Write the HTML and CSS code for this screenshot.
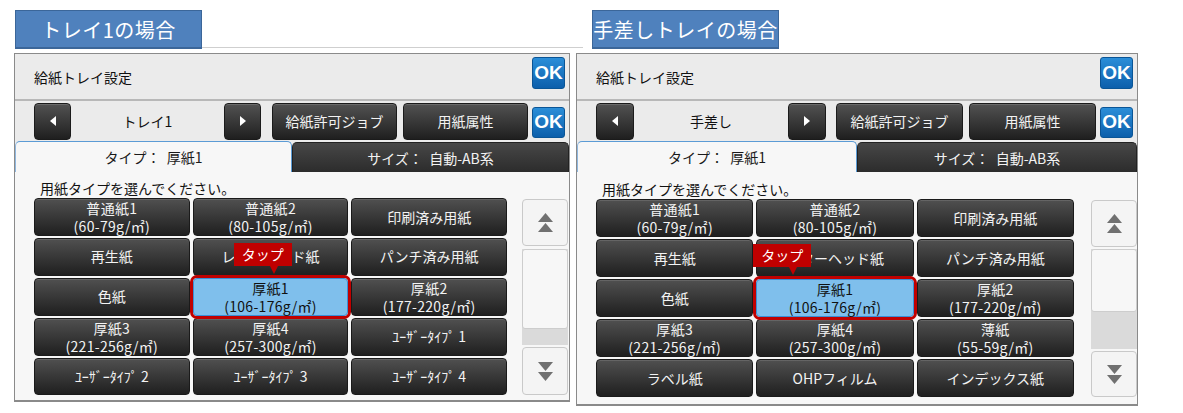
FILE: index.html
```html
<!DOCTYPE html>
<html lang="ja">
<head>
<meta charset="utf-8">
<title>給紙トレイ設定</title>
<link rel="stylesheet" href="styles.css">
</head>
<body>
<div class="page">
  <section class="col col-left">
    <div class="caption-row">
      <div class="caption">トレイ1の場合</div>
      <div class="rule"></div>
    </div>
    <div class="panel">
      <div class="panel-head">
        <span class="head-title">給紙トレイ設定</span>
        <button class="ok ok-head">OK</button>
      </div>
      <div class="toolbar">
        <div class="nav">
          <button class="btn arrow"><svg width="6" height="10" viewBox="0 0 6 10"><polygon points="6,0 6,10 0,5" fill="#fff"/></svg></button>
          <span class="nav-label">トレイ1</span>
          <button class="btn arrow"><svg width="6" height="10" viewBox="0 0 6 10"><polygon points="0,0 0,10 6,5" fill="#fff"/></svg></button>
        </div>
        <button class="btn tb-btn tb-first">給紙許可ジョブ</button>
        <button class="btn tb-btn tb-second">用紙属性</button>
        <button class="ok ok-bar">OK</button>
      </div>
      <div class="tabs">
        <div class="tab tab-active">タイプ：  厚紙1</div>
        <div class="tab tab-dark">サイズ：  自動-AB系</div>
      </div>
      <div class="content">
        <div class="main">
          <p class="prompt">用紙タイプを選んでください。</p>
          <div class="grid">
            <div class="cell two"><span>普通紙1</span><span>(60-79g/㎡)</span></div>
            <div class="cell two"><span>普通紙2</span><span>(80-105g/㎡)</span></div>
            <div class="cell">印刷済み用紙</div>
            <div class="cell">再生紙</div>
            <div class="cell">レターヘッド紙</div>
            <div class="cell">パンチ済み用紙</div>
            <div class="cell">色紙</div>
            <div class="cell two sel"><span class="tap">タップ</span><span>厚紙1</span><span>(106-176g/㎡)</span></div>
            <div class="cell two"><span>厚紙2</span><span>(177-220g/㎡)</span></div>
            <div class="cell two"><span>厚紙3</span><span>(221-256g/㎡)</span></div>
            <div class="cell two"><span>厚紙4</span><span>(257-300g/㎡)</span></div>
            <div class="cell hw">ﾕｰｻﾞｰﾀｲﾌﾟ 1</div>
            <div class="cell hw">ﾕｰｻﾞｰﾀｲﾌﾟ 2</div>
            <div class="cell hw">ﾕｰｻﾞｰﾀｲﾌﾟ 3</div>
            <div class="cell hw">ﾕｰｻﾞｰﾀｲﾌﾟ 4</div>
          </div>
        </div>
        <div class="scroll">
          <button class="sb-btn sb-up"><svg width="15" height="19" viewBox="0 0 15 19"><polygon points="7.5,0 15,9 0,9" fill="#707070"/><polygon points="7.5,10 15,19 0,19" fill="#707070"/></svg></button>
          <div class="track"><div class="thumb"></div></div>
          <button class="sb-btn sb-down"><svg width="15" height="19" viewBox="0 0 15 19"><polygon points="0,0 15,0 7.5,9" fill="#707070"/><polygon points="0,10 15,10 7.5,19" fill="#707070"/></svg></button>
        </div>
      </div>
    </div>
  </section>

  <section class="col col-right">
    <div class="caption-row">
      <div class="caption">手差しトレイの場合</div>
    </div>
    <div class="panel">
      <div class="panel-head">
        <span class="head-title">給紙トレイ設定</span>
        <button class="ok ok-head">OK</button>
      </div>
      <div class="toolbar">
        <div class="nav">
          <button class="btn arrow"><svg width="6" height="10" viewBox="0 0 6 10"><polygon points="6,0 6,10 0,5" fill="#fff"/></svg></button>
          <span class="nav-label">手差し</span>
          <button class="btn arrow"><svg width="6" height="10" viewBox="0 0 6 10"><polygon points="0,0 0,10 6,5" fill="#fff"/></svg></button>
        </div>
        <button class="btn tb-btn tb-first">給紙許可ジョブ</button>
        <button class="btn tb-btn tb-second">用紙属性</button>
        <button class="ok ok-bar">OK</button>
      </div>
      <div class="tabs">
        <div class="tab tab-active">タイプ：  厚紙1</div>
        <div class="tab tab-dark">サイズ：  自動-AB系</div>
      </div>
      <div class="content">
        <div class="main">
          <p class="prompt">用紙タイプを選んでください。</p>
          <div class="grid">
            <div class="cell two"><span>普通紙1</span><span>(60-79g/㎡)</span></div>
            <div class="cell two"><span>普通紙2</span><span>(80-105g/㎡)</span></div>
            <div class="cell">印刷済み用紙</div>
            <div class="cell">再生紙</div>
            <div class="cell">レターヘッド紙</div>
            <div class="cell">パンチ済み用紙</div>
            <div class="cell">色紙</div>
            <div class="cell two sel"><span class="tap">タップ</span><span>厚紙1</span><span>(106-176g/㎡)</span></div>
            <div class="cell two"><span>厚紙2</span><span>(177-220g/㎡)</span></div>
            <div class="cell two"><span>厚紙3</span><span>(221-256g/㎡)</span></div>
            <div class="cell two"><span>厚紙4</span><span>(257-300g/㎡)</span></div>
            <div class="cell two"><span>薄紙</span><span>(55-59g/㎡)</span></div>
            <div class="cell">ラベル紙</div>
            <div class="cell">OHPフィルム</div>
            <div class="cell">インデックス紙</div>
          </div>
        </div>
        <div class="scroll">
          <button class="sb-btn sb-up"><svg width="15" height="19" viewBox="0 0 15 19"><polygon points="7.5,0 15,9 0,9" fill="#707070"/><polygon points="7.5,10 15,19 0,19" fill="#707070"/></svg></button>
          <div class="track"><div class="thumb"></div></div>
          <button class="sb-btn sb-down"><svg width="15" height="19" viewBox="0 0 15 19"><polygon points="0,0 15,0 7.5,9" fill="#707070"/><polygon points="0,10 15,10 7.5,19" fill="#707070"/></svg></button>
        </div>
      </div>
    </div>
  </section>
</div>
</body>
</html>
```

FILE: styles.css
```css
html, body {
  margin: 0;
  padding: 0;
  background: #ffffff;
}

body {
  font-family: "Noto Sans CJK JP", "Noto Sans", sans-serif;
  color: #1a1a1a;
}

button {
  font-family: inherit;
  padding: 0;
  margin: 0;
  cursor: pointer;
}

.page {
  display: flex;
  align-items: flex-start;
  gap: 6px;
  padding: 10px 0 0 14px;
}

.col-left { width: 556px; }
.col-right { width: 562px; }

/* caption labels */
.caption-row {
  display: flex;
  align-items: flex-end;
  height: 39px;
  margin-bottom: 4px;
}

.col-left .caption-row { padding-left: 1px; }
.col-right .caption-row { padding-left: 16px; }

.caption {
  width: 187px;
  height: 39px;
  box-sizing: border-box;
  background: #4f81bd;
  border: 1px solid #3b6699;
  border-bottom-width: 2px;
  color: #ffffff;
  font-size: 20px;
  letter-spacing: 0.5px;
  display: flex;
  align-items: center;
  justify-content: center;
  flex: none;
}

.rule {
  flex: 1;
  height: 1px;
  background: #cfcfcf;
  margin-right: -13px;
  margin-bottom: 1px;
}

/* panel */
.panel {
  border: 1px solid #8a8a8a;
  border-bottom-width: 2px;
  background: #f7f7f7;
}

.panel-head {
  height: 45px;
  background: #ebebeb;
  border-bottom: 2px solid #b8b8b8;
  display: flex;
  align-items: center;
  justify-content: space-between;
  padding: 0 4px 0 19px;
}

.head-title {
  font-size: 14px;
  color: #111;
}

.ok {
  width: 33px;
  box-sizing: border-box;
  background: linear-gradient(#2b8ed8, #0c5fab);
  border: 1px solid #0a5596;
  border-radius: 3px;
  color: #ffffff;
  font-family: "Liberation Sans", Arial, sans-serif;
  font-weight: bold;
  font-size: 19px;
  display: flex;
  align-items: center;
  justify-content: center;
  flex: none;
}

.ok-head {
  height: 32px;
  align-self: flex-start;
  margin-top: 3px;
}

.ok-bar {
  height: 31px;
  margin-left: 4px;
  margin-top: 2px;
}

.toolbar {
  height: 40px;
  background: #ebebeb;
  display: flex;
  align-items: center;
  padding: 0 4px 0 19px;
}

.nav {
  display: flex;
  align-items: center;
  flex: 0 0 227px;
}

.col-right .nav { flex-basis: 230px; }

.btn {
  background: linear-gradient(#525252, #1f1f1f);
  border: 1px solid #1b1b1b;
  border-radius: 4px;
  color: #f3f3f3;
  font-size: 14px;
  box-shadow: inset 0 1px 0 rgba(255, 255, 255, 0.15);
}

.arrow {
  width: 37px;
  height: 37px;
  flex: none;
  display: flex;
  align-items: center;
  justify-content: center;
}

.col-right .arrow { width: 38px; }

.nav-label {
  flex: 1;
  text-align: center;
  font-size: 14px;
  color: #111;
}

.tb-btn {
  flex: 1;
  height: 37px;
}

.tb-first { margin-left: 11px; }
.tb-second { margin-left: 6px; }
.col-right .tb-first { margin-left: 10px; }

/* tabs */
.tabs {
  display: flex;
  height: 31px;
  background: #ebebeb;
}

.tab {
  flex: 1;
  display: flex;
  align-items: center;
  justify-content: center;
  font-size: 14px;
  white-space: pre;
  border-radius: 5px 5px 0 0;
}

.tab-active {
  background: #f7f7f7;
  border-top: 1px solid #5b9bd5;
  border-left: 1px solid #8fb7df;
  border-right: 1px solid #5b9bd5;
  color: #1a1a1a;
}

.tab-dark {
  background: linear-gradient(#474747, #2c2c2c);
  color: #f2f2f2;
  margin-top: 1px;
  border: 1px solid #222;
  border-bottom: none;
}

/* content */
.content {
  display: flex;
  gap: 15px;
  padding: 6px 1px 5px 19px;
}

.col-right .content {
  gap: 17px;
  padding: 7px 0 7px 19px;
}

.main { flex: 1; }

.prompt {
  margin: 0;
  padding-left: 6px;
  font-size: 14px;
  line-height: 20px;
  color: #111;
}

.grid {
  display: grid;
  grid-template-columns: repeat(3, 1fr);
  grid-template-rows: repeat(5, 1fr);
  gap: 2px 3px;
  height: 197px;
}

.col-right .grid { height: 198px; }

.cell {
  position: relative;
  background: linear-gradient(#505050, #1f1f1f);
  border: 1px solid #1a1a1a;
  border-radius: 4px;
  box-shadow: inset 0 1px 0 rgba(255, 255, 255, 0.12);
  color: #f3f3f3;
  font-size: 14px;
  line-height: 19px;
  display: flex;
  flex-direction: column;
  align-items: center;
  justify-content: center;
  white-space: nowrap;
}

.cell.two {
  font-size: 14px;
  line-height: 18px;
  letter-spacing: 0.3px;
}

.cell.hw {
  font-size: 14px;
}

.cell.sel {
  background: #7fbfec;
  border: 1px solid #3a8fd6;
  box-shadow: none;
  color: #111;
  outline: 3px solid #c00000;
  outline-offset: 0;
  z-index: 1;
}

.tap {
  position: absolute;
  left: 40px;
  bottom: calc(100% + 13px);
  width: 58px;
  height: 23px;
  background: #c00000;
  color: #ffffff;
  font-size: 14px;
  line-height: 23px;
  letter-spacing: 0;
  text-align: center;
  z-index: 2;
}

.col-right .tap { left: -4px; }

.tap::after {
  content: "";
  position: absolute;
  left: 36px;
  top: 100%;
  border-left: 4px solid transparent;
  border-right: 4px solid transparent;
  border-top: 8px solid #c00000;
}

/* scrollbar */
.scroll {
  width: 46px;
  flex: none;
  display: flex;
  flex-direction: column;
  margin-top: 21px;
}

.sb-btn {
  background: #f4f4f4;
  border: 1px solid #c9c9c9;
  border-radius: 4px;
  display: flex;
  align-items: center;
  justify-content: center;
  flex: none;
}

.sb-up { height: 47px; }
.sb-down { height: 48px; }
.col-right .sb-down { height: 46px; }

.track {
  flex: 1;
  margin: 3px 0 2px;
  background: #dadada;
}

.col-right .track { margin-top: 2px; }

.thumb {
  height: 80px;
  box-sizing: border-box;
  background: #f7f7f7;
  border: 1px solid #cdcdcd;
  border-radius: 3px;
}

.col-right .thumb { height: 63px; }
```
